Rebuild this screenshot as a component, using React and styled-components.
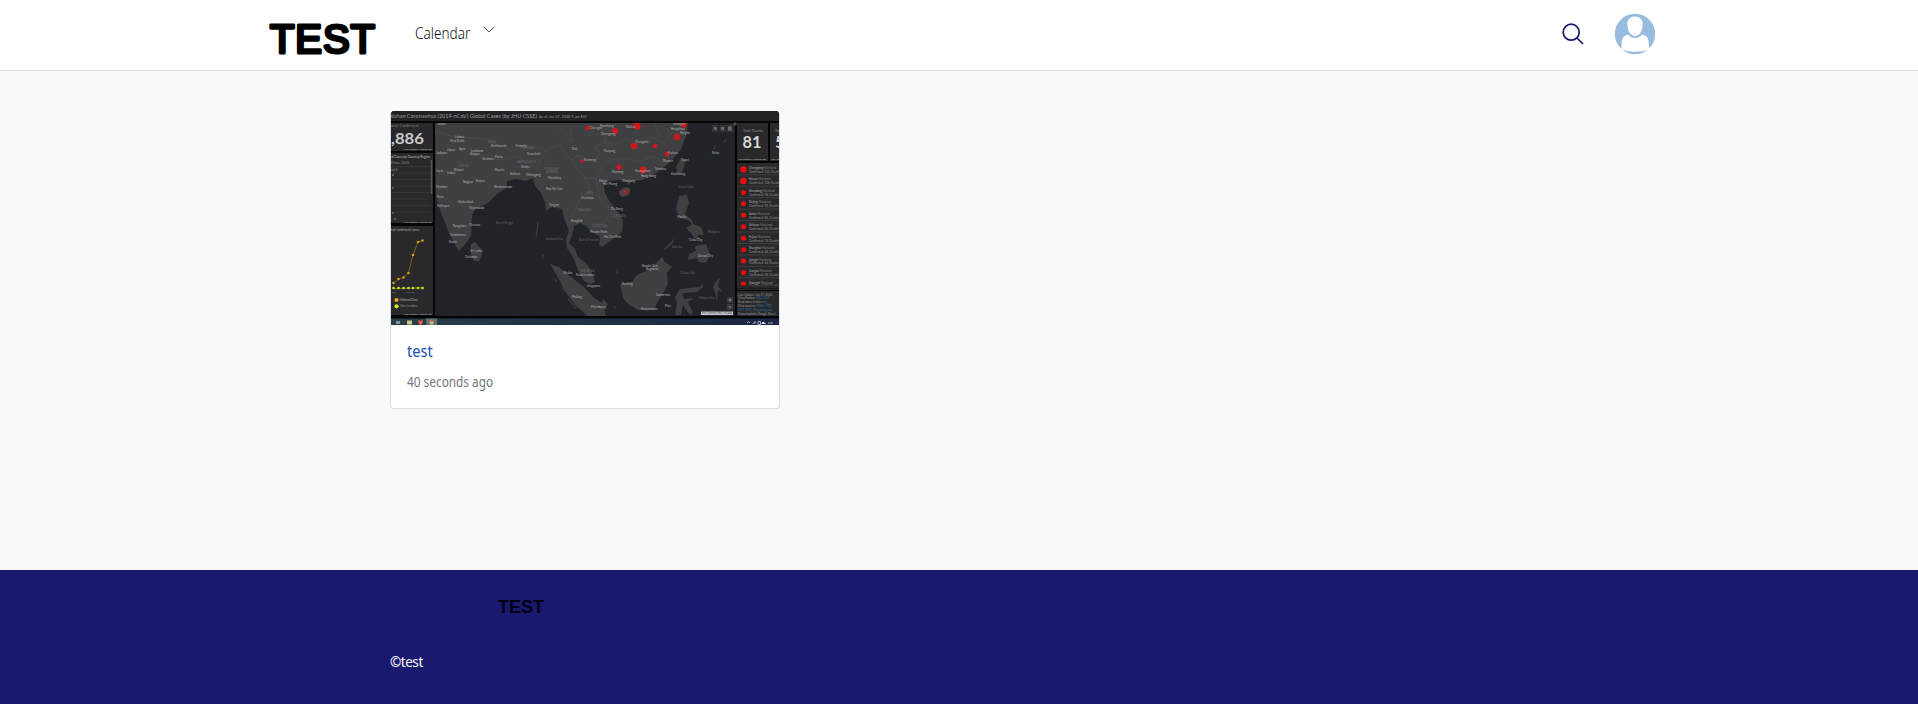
import React from "react";
import styled, { createGlobalStyle } from "styled-components";

const GlobalStyle = createGlobalStyle`
  *, *::before, *::after { box-sizing: border-box; }
  body {
    margin: 0;
    background: #f9f9fb;
    font-family: "Noto Sans", "Open Sans", sans-serif;
  }
`;

const Page = styled.div`
  display: flex;
  flex-direction: column;
  height: 704px;
  overflow: hidden;
`;

const Header = styled.header`
  height: 71px;
  background: #fff;
  border-bottom: 1px solid #dcdce0;
`;

const HeaderInner = styled.div`
  display: flex;
  align-items: center;
  width: 1388px;
  height: 70px;
  margin: 0 auto;
`;

const Logo = styled.svg`
  display: block;
  width: 112px;
  height: 50px;
  margin-top: 5px;
  overflow: visible;
  font-family: "Liberation Sans", Arial, sans-serif;
  font-weight: 400;
`;

const NavItem = styled.a`
  display: flex;
  align-items: flex-start;
  gap: 12px;
  height: 20px;
  margin: -7px 0 0 37.5px;
  color: #111114;
  font-size: 16px;
  font-weight: 300;
  line-height: 22px;
`;

const Condensed = styled.span`
  display: block;
  width: ${(p) => p.$width}px;
  white-space: nowrap;
  transform: scaleX(${(p) => p.$scale});
  transform-origin: left;
`;

const Chevron = styled.svg`
  width: 12px;
  height: 7px;
  margin-top: 4px;
`;

const Tools = styled.div`
  display: flex;
  align-items: center;
  gap: 30px;
  margin-left: auto;
  margin-right: -3px;
`;

const SearchIcon = styled.svg`
  width: 22px;
  height: 22px;
  margin-top: -2px;
`;

const Avatar = styled.svg`
  width: 42px;
  height: 42px;
  margin-top: -2px;
`;

const Main = styled.main`
  flex: 1;
  width: 1138px;
  margin: 0 auto;
  padding-top: 40px;
`;

const Card = styled.article`
  width: 390px;
  height: 298px;
  overflow: hidden;
  background: #fff;
  border: 1px solid #dcdde2;
  border-top: 0;
  border-radius: 4px;
`;

const Thumbnail = styled.svg`
  display: block;
  width: 388px;
  height: 214px;
  font-family: Lato, sans-serif;
`;

const CardBody = styled.div`
  display: flex;
  flex-direction: column;
  gap: 10px;
  padding: 15px 16px;
`;

const CardTitle = styled.a`
  color: #1c52ae;
  font-size: 15.5px;
  line-height: 22px;
`;

const CardTime = styled.time`
  color: #74787d;
  font-size: 14px;
  line-height: 20px;
`;

const Footer = styled.footer`
  height: 134px;
  background: #191970;
`;

const FooterInner = styled.div`
  display: flex;
  flex-direction: column;
  width: 1138px;
  margin: 0 auto;
  padding-top: 26px;
`;

const FooterLogo = styled.span`
  padding-left: 108px;
  color: #000010;
  font: 700 18px/22px "Liberation Sans", Arial, sans-serif;
`;

const Copyright = styled.span`
  margin-top: 34px;
  color: #fff;
  font-size: 13.5px;
  line-height: 20px;
  letter-spacing: -0.45px;
`;

/* Map labels: x, y, text */
const labels = [
  [438, 125, "Kabul"], [455, 138, "Lahore"], [450, 142, "New Delhi"], [447, 151, "Jaipur"],
  [459, 150, "Agra"], [471, 152, "Lucknow"], [470, 155, "Kanpur"], [491, 147, "Kathmandu"],
  [482, 160, "Varanasi"], [495, 158, "Patna"], [515, 147, "Thimphu"], [527, 155, "Guwahati"],
  [521, 168, "Dhaka"], [510, 175, "Kolkata"], [526, 176, "Chittagong"], [436, 154, "Jodhpur"],
  [436, 172, "Surat"], [447, 174, "Indore"], [454, 171, "Bhopal"], [495, 171, "Ranchi"],
  [463, 183, "Nagpur"], [476, 182, "Raipur"], [494, 188, "Bhubaneswar"], [436, 188, "Mumbai"],
  [437, 198, "Pune"], [437, 207, "Kolhapur"], [458, 203, "Hyderabad"], [469, 209, "Vijayawada"],
  [453, 227, "Bangalore"], [469, 226, "Chennai"], [450, 236, "Coimbatore"], [449, 243, "Kochi"],
  [470, 252, "Sri Lanka"], [465, 258, "Colombo"], [548, 179, "Mandalay"], [546, 190, "Nay Pyi Taw"],
  [549, 206, "Yangon"], [572, 150, "Dali"], [584, 161, "Kunming"], [604, 152, "Guiyang"],
  [590, 129, "Chengdu"], [600, 127, "Nanchong"], [601, 135, "Chongqing"], [626, 128, "Wuhan"],
  [635, 143, "Changsha"], [612, 173, "Nanning"], [635, 172, "Guangzhou"], [641, 177, "Hong Kong"],
  [599, 182, "Hanoi"], [603, 185, "Hai Phong"], [622, 182, "Zhanjiang"], [581, 199, "Vientiane"],
  [611, 210, "Da Nang"], [571, 222, "Bangkok"], [590, 233, "Phnom Penh"], [604, 238, "Ho Chi Minh"],
  [563, 274, "Medan"], [576, 276, "Kuala Lumpur"], [587, 287, "Singapore"], [572, 298, "Padang"],
  [591, 308, "Palembang"], [622, 285, "Kuching"], [642, 267, "Bandar Seri"], [646, 270, "Begawan"],
  [656, 296, "Samarinda"], [665, 307, "Palu"], [641, 310, "Banjarmasin"], [673, 125, "Shanghai"],
  [671, 130, "Hangzhou"], [680, 134, "Ningbo"], [668, 154, "Fuzhou"], [663, 162, "Xiamen"],
  [655, 170, "Shantou"], [681, 161, "Taipei"], [671, 175, "Kaohsiung"], [712, 154, "Naha"],
  [677, 218, "Manila"], [689, 241, "Cebu City"], [698, 257, "Davao City"],
];

const faintLabels = [
  [458, 167, "I N D I A"], [488, 143, "NEPAL"], [523, 149, "BHUTAN"], [517, 163, "BANGLADESH"],
  [544, 170, "MYANMAR"], [546, 173, "(BURMA)"], [577, 211, "THAILAND"], [586, 194, "LAOS"],
  [592, 227, "CAMBODIA"], [581, 272, "MALAYSIA"], [613, 217, "VIETNAM"], [679, 188, "Luzon Strait"],
  [496, 224, "Bay of Bengal"], [546, 240, "Andaman Sea"], [579, 241, "Gulf of Thailand"],
  [672, 248, "Sulu Sea"], [680, 274, "Celebes Sea"], [708, 233, "Philippine"], [699, 299, "Molucca Sea"],
];

/* Outbreak markers: x, y, radius */
const cases = [
  [588, 128, 2.3], [615, 131, 3], [637, 126, 3.6], [684, 125, 2.6], [677, 137, 3.2],
  [634, 146, 3.3], [655, 146, 2.3], [667, 154, 2.4], [619, 167, 2.6], [643, 170, 3.4],
  [582, 161, 1.7], [625, 192, 1.8],
];

const regions = [
  "Chongqing", "Henan", "Shandong", "Beijing", "Anhui", "Sichuan",
  "Fujian", "Shanghai", "Jiangxi", "Jiangsu", "Guangxi",
];

const curve = [
  [393.5, 283], [398.5, 279], [403.5, 277.5], [408.5, 273], [413, 255], [418, 242], [422.5, 240.5],
];

const land = [
  "M435 123H688L686 136L681 149L672 160L663 168L652 176L642 180L632 181L628 185L627 181L618 180L608 181L604 186L605 193L610 202L618 212L623 220L622 232L613 239L602 247L599 245L600 237L592 232L586 226L580 223L574 226L572 236L569 243L575 249L578 257L587 264L592 273L595 282L591 284L584 281L578 271L574 259L567 248L566 239L569 231L564 218L562 209L552 207L546 211L545 202L541 193L535 186L533 178L526 181L515 179L507 181L507 187L496 195L488 203L475 209L472 216L471 235L467 242L459 251L454 243L448 230L441 213L436 198Z",
  "M471 244L475 242L481 249L482 256L479 261L474 261L471 255Z",
  "M550 264L559 267L570 276L584 287L593 297L603 304L606 316H588L575 305L565 291L556 274Z",
  "M620 284L632 282L637 275L648 270L657 262L662 257L665 262L672 267L667 273L668 283L664 292L658 301L654 310H638L628 304L623 298Z",
  "M677 303L675 297L680 289L700 287L702 284L703 287L697 292L682 293L684 299L694 298L688 302L693 313L689 314L683 305L681 315H675Z",
  "M679 196L687 195L689 203L685 214L692 220L694 226L688 220L680 218L676 209Z",
  "M686 228L693 224L701 227L704 235L697 235L700 240L694 238L691 233Z",
  "M695 246L706 244L710 255L706 263L699 262L697 258L688 260L689 254L696 251Z",
  "M664 249L675 238L677 234L672 244L665 250Z",
  "M681 158L686 160L682 173L678 175L676 167Z",
  "M619 191L627 187L631 189L628 195L622 197L619 194Z",
  "M716 281L720 278L718 286L722 292L718 290L717 301L715 292L713 287Z",
  "M603 299L608 304L605 308L602 303Z",
];

const borders =
  "M555 124L567 136L572 142L570 128M435 131C465 143 480 133 498 145S528 140 545 151L560 145M470 154L500 160L520 156L530 173M545 151L536 170M560 145L571 160L580 155L594 162L600 153L594 147L606 142L616 145L626 139L640 145L651 137L664 143L673 132M571 160L585 178L596 179L603 165L611 160L627 158L640 162L653 156L664 162M585 178L590 190L579 201L573 215M596 179L600 199L612 211L603 224L588 224M655 123L660 137M606 142L603 130L617 124";

function DashboardThumbnail() {
  return (
    <Thumbnail viewBox="391 111 388 214">
      <defs>
        <linearGradient id="taskbar">
          <stop offset="0" stopColor="#263f48" />
          <stop offset="1" stopColor="#1b2644" />
        </linearGradient>
        <clipPath id="map"><path d="M435 123H735V316H435Z" /></clipPath>
      </defs>
      <path fill="#050506" d="M391 111H779V325H391Z" />
      <path fill="#222224" d="M391 111H779V121H391Z" />
      <path fill="#29292b" d="M391 123H433V151H391ZM391 153H433V223H391ZM391 226H433V315H391ZM737 123H768V161H737ZM770 123H779V161H770ZM737 163H779V288H737ZM737 291H779V316H737Z" />
      <path fill="#222328" d="M435 123H735V316H435Z" />

      <g clipPath="url(#map)">
        <g fill="#404042">{land.map((d) => <path key={d} d={d} />)}</g>
        <path d={borders} fill="none" stroke="#4d4d4f" strokeWidth=".7" />
        <path d="M538 222L537 231L536 237M543 255L544 257M554 279L557 282M562 288L565 291M568 299L572 303L576 309M616 271L617 273M614 307L616 308M713 149L716 146M723 143L726 140" fill="none" stroke="#3d3d41" strokeWidth="1.1" />
        <g fill="#e80f14" fillOpacity=".86">
          {cases.map(([x, y, r]) => <circle key={`${x}-${y}`} cx={x} cy={y} r={r} />)}
        </g>
        <circle cx="625" cy="192" r="5" fill="#a04040" fillOpacity=".2" />
        <g fill="#b0b0b2" fontSize="3.1">
          {labels.map(([x, y, name]) => <text key={name} x={x} y={y}>{name}</text>)}
        </g>
        <g fill="#68686c" fontSize="2.8">
          {faintLabels.map(([x, y, name]) => <text key={name} x={x} y={y}>{name}</text>)}
        </g>
        <path fill="#353538" d="M712 125H718V132H712ZM719.500 125H725.500V132H719.500ZM727 125H733V132H727Z" />
        <path fill="#6b6b6e" d="M714 127H716.500V130H714ZM721 127H724V130H721ZM728 126.500H731.500V130.500H728Z" />
        <path fill="#38383b" d="M727 297H733V303H727ZM727 304H733V310H727Z" />
        <path d="M728.500 300H731.500M730 298.500V301.500M728.500 307H731.500" stroke="#aaa" strokeWidth=".7" />
        <path fill="#c8c8ca" d="M701 311.500H733V315H701Z" />
        <text x="702" y="314.400" fill="#555" fontSize="3" textLength="30">Esri, Garmin, FAO, NOAA</text>
      </g>
      <circle cx="735" cy="124" r="1.700" fill="#4b4b4e" />

      <text x="388" y="117.700" fill="#9c9c9e" fontSize="5.400" textLength="149" lengthAdjust="spacingAndGlyphs">Wuhan Coronavirus (2019-nCoV) Global Cases (by JHU CSSE)</text>
      <text x="539" y="117.500" fill="#a5a5a6" fontSize="3.300" textLength="48">As of Jan 27, 2020 9 am EST</text>

      <text x="389" y="126.500" fill="#929294" fontSize="3.300" textLength="29">Total Confirmed</text>
      <text x="391" y="143.500" fill="#cacacb" fontSize="16" fontWeight="700" textLength="33" lengthAdjust="spacingAndGlyphs">,886</text>
      <text x="404" y="149.500" fill="#b9b9ba" fontSize="2.500" textLength="28">Last updated: a minute ago</text>
      <text x="390" y="157.500" fill="#c7c7c8" fontSize="3" textLength="40">ed Cases by Country/Region</text>
      <text x="391" y="164" fill="#949496" fontSize="3" textLength="18">China: 2,825</text>
      <text x="391" y="171" fill="#949496" fontSize="3">nd: 8</text>
      <path d="M391 166.500H430M391 173H430M391 179.500H430M391 186H430M391 192.500H430M391 199H430M391 205.500H430M391 212H430" stroke="#39393b" strokeWidth=".7" />
      <path d="M431.500 160V194" stroke="#5a5a5c" strokeWidth="1.500" />
      <path d="M393 174V176M393 187V189M393 212V214M395 218V220" stroke="#8c8c8e" />
      <text x="404" y="222.500" fill="#b5b5b6" fontSize="2.500" textLength="28">Last updated: a minute ago</text>

      <text x="391" y="230.500" fill="#bbbbbc" fontSize="3" textLength="28">ted confirmed cases</text>
      <path d="M393.500 288.500L408 288.300L422.500 287.700" fill="none" stroke="#77800c" />
      <polyline points={curve.join(" ")} fill="none" stroke="#8a650f" strokeWidth=".9" />
      {curve.map(([x, y]) => (
        <g key={x}>
          <circle cx={x} cy={y} r="1.300" fill="#cf9d16" />
          <circle cx={x} cy="288" r="1.300" fill="#d2df24" />
        </g>
      ))}
      <text x="392" y="293" fill="#888" fontSize="2.500">Jan</text>
      <text x="407" y="293" fill="#888" fontSize="2.500">Jan 26</text>
      <circle cx="396.500" cy="300" r="2.100" fill="#f0a31d" />
      <circle cx="396.500" cy="306.300" r="2.100" fill="#dbe426" />
      <text x="399.500" y="301" fill="#aaa" fontSize="3" textLength="18">Mainland China</text>
      <text x="399.500" y="307.300" fill="#858587" fontSize="3" textLength="18">Other Locations</text>
      <text x="404" y="314.500" fill="#bbb" fontSize="2.500" textLength="28">Last updated: a minute ago</text>

      <text x="743" y="131.500" fill="#919193" fontSize="3.500" textLength="20">Total Deaths</text>
      <text x="742.500" y="148" fill="#d6d6d7" fontSize="17" fontWeight="700" textLength="19" lengthAdjust="spacingAndGlyphs">81</text>
      <text x="738" y="159.500" fill="#b9b9ba" fontSize="2.500" textLength="28">Last updated: a minute ago</text>
      <text x="775" y="131.500" fill="#919193" fontSize="3.500">Total</text>
      <text x="775" y="148" fill="#d6d6d7" fontSize="17" fontWeight="700">5</text>
      <text x="771" y="159.500" fill="#b9b9ba" fontSize="2.500">Last up</text>

      {regions.map((region, i) => {
        const y = 169.500 + i * 11.450;
        return (
          <g key={region} fontSize="3">
            <path d={`M737 ${y + 5.300}H779`} stroke="#464648" strokeWidth=".7" />
            <circle cx="743.500" cy={y} r={i < 2 ? 3.200 : 2.500} fill="#f20a0a" />
            <text x="749" y={y - 0.500} fill="#b3b3b4">{region} <tspan fill="#828284">Mainland</tspan></text>
            <text x="749" y={y + 3.300} fill="#919193">Confirmed: {110 - i * 6}, Deaths</text>
          </g>
        );
      })}
      <path fill="#29292b" d="M737 285.500H779V288.500H737Z" />

      <g fill="#979799" fontSize="3">
        <text x="738" y="295.500">Last Update: Jan 27, 2020</text>
        <text x="738" y="299">Visualization: <tspan fill="#356a9e">JHU CSSE</tspan></text>
        <text x="738" y="303">Read more in this <tspan fill="#356a9e">blog</tspan></text>
        <text x="738" y="307">Data sources: <tspan fill="#356a9e">WHO, CDC</tspan></text>
        <text x="738" y="311" fill="#356a9e">DXY, NHC, Dingxiangyuan</text>
        <text x="738" y="315">Downloadable Google Sheet</text>
      </g>

      <path fill="url(#taskbar)" d="M391 318.500H779V325H391Z" />
      <path fill="#65706e" d="M426 318.500H437V325H426Z" />
      <path fill="#78959d" d="M396 321H400V324H396Z" />
      <path fill="#d1c585" d="M407 320.500H412V324.500H407Z" />
      <path fill="#e85d45" d="M418 320.500H423L422 324L420.500 325L419 324Z" />
      <circle cx="431.500" cy="322.500" r="2.200" fill="#c3aa75" />
      <path d="M429.500 321.500A2.200 2.200 0 0 1 433.500 321.500" stroke="#c95b4d" strokeWidth="1.200" fill="none" />
      <circle cx="431.500" cy="322.700" r=".9" fill="#8bb4df" />
      <path d="M747 323L748.500 321.500L750 323M753 324L755 321.500V324M758 321.500H760.500V324.500H758ZM762 322.500H764M768 323H773" fill="none" stroke="#b4bac7" strokeWidth=".9" />
      <path fill="#d5dae2" d="M761 324L763.500 321.500L766 324Z" />
    </Thumbnail>
  );
}

export default function App() {
  return (
    <>
      <GlobalStyle />
      <Page>
        <Header>
          <HeaderInner>
            <Logo viewBox="0 0 112 50">
              <text x="5" y="39.500" fontSize="40" textLength="105" stroke="#000" strokeWidth="3.200" strokeLinejoin="round">TEST</text>
            </Logo>
            <NavItem>
              <Condensed $width={56.5} $scale={0.85}>Calendar</Condensed>
              <Chevron viewBox="0 0 12 7" fill="none" stroke="#55555a">
                <path d="M.7.7L6 6L11.300.7" />
              </Chevron>
            </NavItem>
            <Tools>
              <SearchIcon viewBox="0 0 22 22" fill="none" stroke="#191970" strokeWidth="1.700">
                <circle cx="9.200" cy="9.200" r="8" />
                <path d="M15 15L21 21" />
              </SearchIcon>
              <Avatar viewBox="0 0 42 42">
                <circle cx="21" cy="21" r="20.200" fill="#97bcdf" />
                <path fill="#fff" d="M21 3.500C26 3.500 28.700 6.500 28.600 11.500C28.500 18 25.500 23 21 23S13.500 18 13.400 11.500C13.300 6.500 16 3.500 21 3.500Z" />
                <path fill="#fff" d="M14 21.500C16 24 18.200 25 21 25S26 24 28 21.500C32.500 22.500 34 24.500 34.700 29L35.300 36.500C27 39.500 15 39.500 7.200 36.500L7.700 29C8.300 24.500 10 22.500 14 21.500Z" />
              </Avatar>
            </Tools>
          </HeaderInner>
        </Header>
        <Main>
          <Card>
            <DashboardThumbnail />
            <CardBody>
              <CardTitle><Condensed $width={27} $scale={0.94}>test</Condensed></CardTitle>
              <CardTime><Condensed $width={86} $scale={0.845}>40 seconds ago</Condensed></CardTime>
            </CardBody>
          </Card>
        </Main>
        <Footer>
          <FooterInner>
            <FooterLogo>TEST</FooterLogo>
            <Copyright>©test</Copyright>
          </FooterInner>
        </Footer>
      </Page>
    </>
  );
}
